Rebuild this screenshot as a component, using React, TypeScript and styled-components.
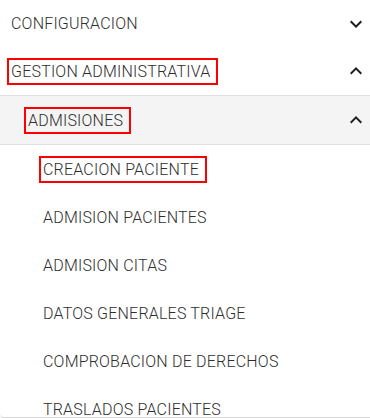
import React from "react";
import styled, { createGlobalStyle } from "styled-components";

const GlobalStyle = createGlobalStyle`
  html, body { margin: 0; padding: 0; background: #ffffff; }
  body { font-family: Roboto, "Liberation Sans", sans-serif; }
`;

const Nav = styled.nav`
  width: 370px;
  height: 418px;
  box-sizing: border-box;
  overflow: hidden;
  background: #ffffff;
  border-bottom: 1px solid #d6d6d6;
  border-bottom-left-radius: 4px;
  display: flex;
  flex-direction: column;
`;

const Group = styled.div<{ $shaded?: boolean }>`
  display: flex;
  flex-direction: column;
  background: ${(p) => (p.$shaded ? "#f4f4f4" : "transparent")};
  border-top: ${(p) => (p.$shaded ? "1px solid #e0e0e0" : "none")};
  border-bottom: ${(p) => (p.$shaded ? "1px solid #e0e0e0" : "none")};
`;

const Row = styled.div<{ $indent: number; $h?: number }>`
  flex: none;
  height: ${(p) => p.$h ?? 48}px;
  display: flex;
  align-items: center;
  justify-content: space-between;
  padding-left: ${(p) => p.$indent}px;
  padding-right: 2px;
  box-sizing: border-box;
`;

const Label = styled.span<{ $boxed?: boolean }>`
  font-size: 16px;
  font-weight: 300;
  line-height: 19px;
  color: #2e2e2e;
  letter-spacing: 0.2px;
  white-space: nowrap;
  border: 2px solid ${(p) => (p.$boxed ? "#ff0000" : "transparent")};
  padding: 2px 6px 2px 2px;
  margin-left: -4px;
`;

const Chevron = styled.svg`
  width: 24px;
  height: 24px;
  fill: #1f1f1f;
  flex: none;
`;

const Down = () => (
  <Chevron viewBox="0 0 24 24">
    <path d="M16.59 8.59L12 13.17 7.41 8.59 6 10l6 6 6-6z" />
  </Chevron>
);

const Up = () => (
  <Chevron viewBox="0 0 24 24">
    <path d="M12 8l-6 6 1.41 1.41L12 10.83l4.59 4.58L18 14z" />
  </Chevron>
);

const children = [
  { label: "CREACION PACIENTE", boxed: true },
  { label: "ADMISION PACIENTES" },
  { label: "ADMISION CITAS" },
  { label: "DATOS GENERALES TRIAGE" },
  { label: "COMPROBACION DE DERECHOS" },
  { label: "TRASLADOS PACIENTES" },
];

export default function App() {
  return (
    <>
      <GlobalStyle />
      <Nav>
        <Row $indent={11} $h={47}>
          <Label>CONFIGURACION</Label>
          <Down />
        </Row>
        <Row $indent={11}>
          <Label $boxed>GESTION ADMINISTRATIVA</Label>
          <Up />
        </Row>
        <Group $shaded>
          <Row $indent={28}>
            <Label $boxed>ADMISIONES</Label>
            <Up />
          </Row>
        </Group>
        <Group>
          {children.map((c) => (
            <Row key={c.label} $indent={43}>
              <Label $boxed={c.boxed}>{c.label}</Label>
            </Row>
          ))}
        </Group>
      </Nav>
    </>
  );
}
